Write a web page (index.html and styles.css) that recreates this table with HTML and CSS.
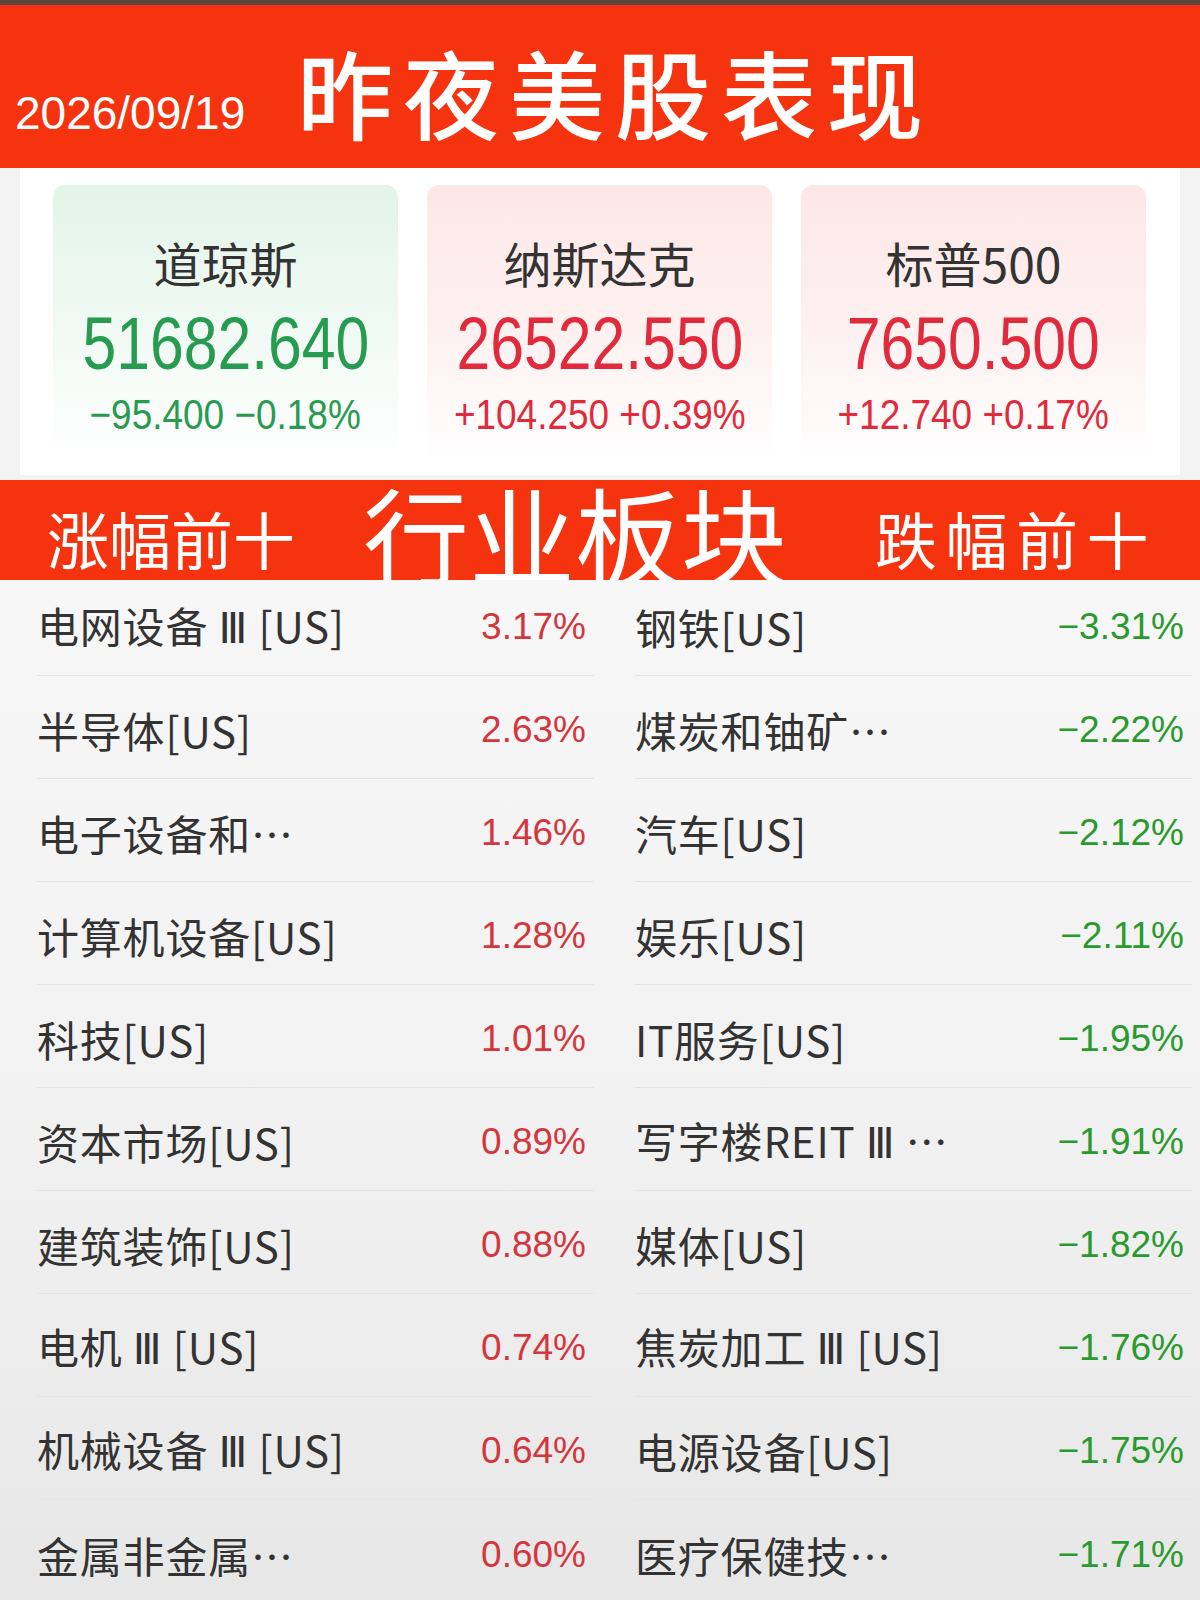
FILE: index.html
```html
<!DOCTYPE html>
<html lang="zh-CN">
<head>
<meta charset="utf-8">
<title>昨夜美股表现</title>
<link rel="stylesheet" href="styles.css">
</head>
<body>
<div class="page">
  <div class="topline"></div>
  <header class="header">
    <div class="date">2026/09/19</div>
    <h1 class="title">昨夜美股表现</h1>
  </header>

  <section class="indices">
    <div class="card card-down">
      <div class="name">道琼斯</div>
      <div class="value"><span class="narrow">51682.640</span></div>
      <div class="change"><span class="narrow">−95.400 −0.18%</span></div>
    </div>
    <div class="card card-up">
      <div class="name">纳斯达克</div>
      <div class="value"><span class="narrow">26522.550</span></div>
      <div class="change"><span class="narrow">+104.250 +0.39%</span></div>
    </div>
    <div class="card card-up">
      <div class="name">标普500</div>
      <div class="value"><span class="narrow">7650.500</span></div>
      <div class="change"><span class="narrow">+12.740 +0.17%</span></div>
    </div>
  </section>

  <div class="sector-bar">
    <span class="side side-left">涨幅前十</span>
    <span class="main">行业板块</span>
    <span class="side side-right">跌幅前十</span>
  </div>

  <section class="list">
    <div class="col">
      <div class="row"><span class="label">电网设备 <span class="roman">Ⅲ</span> [US]</span><span class="pct up">3.17%</span></div>
      <div class="row"><span class="label">半导体[US]</span><span class="pct up">2.63%</span></div>
      <div class="row"><span class="label">电子设备和…</span><span class="pct up">1.46%</span></div>
      <div class="row"><span class="label">计算机设备[US]</span><span class="pct up">1.28%</span></div>
      <div class="row"><span class="label">科技[US]</span><span class="pct up">1.01%</span></div>
      <div class="row"><span class="label">资本市场[US]</span><span class="pct up">0.89%</span></div>
      <div class="row"><span class="label">建筑装饰[US]</span><span class="pct up">0.88%</span></div>
      <div class="row"><span class="label">电机 <span class="roman">Ⅲ</span> [US]</span><span class="pct up">0.74%</span></div>
      <div class="row"><span class="label">机械设备 <span class="roman">Ⅲ</span> [US]</span><span class="pct up">0.64%</span></div>
      <div class="row"><span class="label">金属非金属…</span><span class="pct up">0.60%</span></div>
    </div>
    <div class="col">
      <div class="row"><span class="label">钢铁[US]</span><span class="pct down">−3.31%</span></div>
      <div class="row"><span class="label">煤炭和铀矿…</span><span class="pct down">−2.22%</span></div>
      <div class="row"><span class="label">汽车[US]</span><span class="pct down">−2.12%</span></div>
      <div class="row"><span class="label">娱乐[US]</span><span class="pct down">−2.11%</span></div>
      <div class="row"><span class="label">IT服务[US]</span><span class="pct down">−1.95%</span></div>
      <div class="row"><span class="label">写字楼REIT <span class="roman">Ⅲ</span> …</span><span class="pct down">−1.91%</span></div>
      <div class="row"><span class="label">媒体[US]</span><span class="pct down">−1.82%</span></div>
      <div class="row"><span class="label">焦炭加工 <span class="roman">Ⅲ</span> [US]</span><span class="pct down">−1.76%</span></div>
      <div class="row"><span class="label">电源设备[US]</span><span class="pct down">−1.75%</span></div>
      <div class="row"><span class="label">医疗保健技…</span><span class="pct down">−1.71%</span></div>
    </div>
  </section>
</div>
</body>
</html>
```

FILE: styles.css
```css
* { box-sizing: border-box; }

html, body {
  margin: 0;
  padding: 0;
}

body {
  width: 1200px;
  height: 1600px;
  overflow: hidden;
  background: #f3f3f3;
  font-family: "Noto Sans CJK SC", "Liberation Sans", sans-serif;
  color: #333;
}

.page {
  width: 1200px;
  height: 1600px;
  display: flex;
  flex-direction: column;
  overflow: hidden;
}

.page > * { flex-shrink: 0; }

.topline {
  height: 5px;
  background: #5c4640;
}

/* ---------- header ---------- */
.header {
  height: 163px;
  background: #f5330f;
  display: flex;
  align-items: flex-start;
  padding-left: 15px;
}

.date {
  width: 282px;
  margin-top: 85px;
  font-family: "Liberation Sans", sans-serif;
  font-size: 46px;
  line-height: 1;
  color: #fff;
}

.title {
  margin: 38px 0 0 0;
  font-family: "Noto Sans CJK SC", sans-serif;
  font-size: 96px;
  font-weight: 500;
  line-height: 1;
  letter-spacing: 10px;
  color: #fff;
}

/* ---------- index cards ---------- */
.indices {
  height: 307px;
  margin: 0 20px;
  background: #fff;
  display: flex;
  gap: 29px;
  padding: 17px 0 0 33px;
}

.card {
  width: 345px;
  height: 278px;
  border-radius: 12px;
  display: flex;
  flex-direction: column;
  align-items: center;
  padding-top: 47px;
}

.card-down {
  background: linear-gradient(180deg, #e3f4e9 0%, #f2faf5 55%, #ffffff 100%);
  color: #279b50;
}

.card-up {
  background: linear-gradient(180deg, #fde7e6 0%, #fdf2f1 55%, #ffffff 100%);
  color: #e12a3c;
}

.name {
  height: 60px;
  font-size: 48px;
  line-height: 60px;
  color: #333;
}

.value {
  margin-top: 12px;
  height: 80px;
  font-family: "Liberation Sans", sans-serif;
  font-size: 74px;
  line-height: 80px;
  white-space: nowrap;
}

.value .narrow {
  display: inline-block;
  transform: scaleX(0.82);
  transform-origin: center;
}

.change {
  margin-top: 6px;
  height: 50px;
  font-family: "Liberation Sans", sans-serif;
  font-size: 42px;
  line-height: 50px;
  white-space: nowrap;
}

.change .narrow {
  display: inline-block;
  transform: scaleX(0.88);
  transform-origin: center;
}

/* ---------- sector bar ---------- */
.sector-bar {
  margin-top: 5px;
  height: 100px;
  background: #f5330f;
  display: flex;
  align-items: center;
  padding-left: 47px;
  color: #fff;
}

.side {
  font-size: 62px;
  line-height: 1;
  margin-top: 16px;
}

.side-left { width: 316px; }

.side-right { letter-spacing: 8.5px; }

.main {
  width: 512px;
  font-size: 106px;
  line-height: 90px;
  margin-top: 4px;
}

/* ---------- list ---------- */
.list {
  flex: 1 1 auto;
  flex-shrink: 1;
  min-height: 0;
  overflow: hidden;
  display: grid;
  grid-template-columns: 557px 557px;
  align-content: start;
  column-gap: 41px;
  padding: 0 8px 0 37px;
  background: linear-gradient(180deg, #f7f7f7 0%, #f2f2f2 50%, #e7e7e7 100%);
}

.row {
  display: flex;
  justify-content: space-between;
  align-items: center;
  height: 103px;
  padding: 29px 8px 23px 0;
  border-bottom: 1px solid #e5e5e5;
}

.row:first-child {
  height: 96px;
  padding-top: 22px;
}

.row:last-child { border-bottom: none; }

.label {
  font-size: 42px;
  line-height: 50px;
  letter-spacing: 0.8px;
  color: #333;
  white-space: nowrap;
}

.roman {
  font-family: "DejaVu Sans", sans-serif;
  font-size: 42px;
  font-weight: normal;
}

.pct {
  font-family: "Liberation Sans", sans-serif;
  font-size: 37px;
  line-height: 50px;
}

.pct.up { color: #d4363e; }
.pct.down { color: #2a9a2e; }
```
